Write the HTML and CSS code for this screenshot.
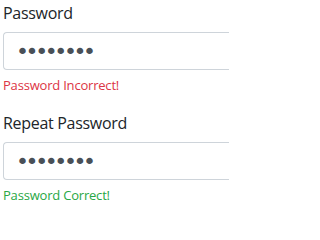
FILE: index.html
```html
<!DOCTYPE html>
<html>
<head><link rel="stylesheet" href="styles.css"></head>
<body>
<form class="form">
  <div class="group">
    <label class="label" for="pw">Password</label>
    <input class="control" id="pw" type="password" value="12345678">
    <div class="feedback invalid">Password Incorrect!</div>
  </div>
  <div class="group">
    <label class="label" for="pw2">Repeat Password</label>
    <input class="control" id="pw2" type="password" value="12345678">
    <div class="feedback valid">Password Correct!</div>
  </div>
</form>
</body>
</html>
```
FILE: styles.css
```css
html,body{margin:0;padding:0;background:#fff}
body{font-family:"Open Sans",sans-serif;color:#212529}
.form{padding-left:3px;width:226px}
.group{display:flex;flex-direction:column;height:110px}
.label{font-size:16px;line-height:26px;margin-bottom:6px;letter-spacing:-0.3px}
.control{box-sizing:border-box;width:100%;height:38px;padding:0 12px;border:1px solid #ced4da;border-right:none;border-radius:4px 0 0 4px;color:#495057;font-family:"DejaVu Sans",sans-serif;font-size:22px;letter-spacing:-3.4px;outline:none;background:#fff}
.feedback{font-size:13px;line-height:20px;margin-top:5px;letter-spacing:-0.2px}
.invalid{color:#dc3545}
.valid{color:#28a745}
```
